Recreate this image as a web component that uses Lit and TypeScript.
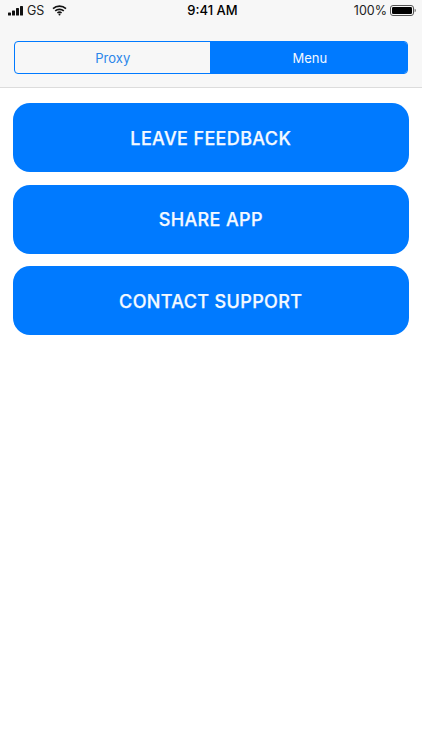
import { LitElement, html, css, svg } from "lit";
import { customElement } from "lit/decorators.js";

@customElement("app-root")
export class AppRoot extends LitElement {
  static styles = css`
    :host { display: block; width: 422px; height: 750px; background: #fff; font-family: Inter, "Liberation Sans", sans-serif; overflow: hidden; }
    .head { background: #f7f7f7; height: 88px; border-bottom: 1.5px solid #dcdcdc; box-sizing: border-box; display: flex; flex-direction: column; }
    .status { height: 20px; display: grid; grid-template-columns: 1fr auto 1fr; align-items: center; color: #000; font-size: 13px; padding: 0 6px 0 8px; }
    .left { display: flex; align-items: center; font-size: 12.5px; color: #222; }
    .carrier { margin-left: 2px; }
    .wifi { margin-left: 8px; }
    .time { font-weight: 500; font-size: 13px; padding-left: 1px; }
    .right { display: flex; justify-content: flex-end; align-items: center; font-size: 12.5px; color: #222; gap: 3px; }
    .seg { margin: 21px 14px 0 14px; height: 33px; display: grid; grid-template-columns: 194.5px 1fr; border: 1.5px solid #007aff; border-radius: 4px; box-sizing: border-box; overflow: hidden; font-size: 13px; }
    .seg div { display: flex; align-items: center; justify-content: center; color: #2a86ea; padding-left: 1px; }
    .seg .on { background: #007aff; color: #f2f8ff; padding-left: 3px; }
    .list { display: flex; flex-direction: column; gap: 12.5px; padding: 15px 13px 0 12.5px; }
    .btn { height: 69px; border-radius: 17px; background: #007aff; color: #f4f9ff; display: flex; align-items: center; justify-content: center; padding-top: 1px; box-sizing: border-box; font-size: 18px; font-weight: 500; -webkit-text-stroke: 0.25px #f4f9ff; letter-spacing: 0.36px; }
  `;

  render() {
    return html`
      <div class="head">
        <div class="status">
          <div class="left">
            <svg width="17" height="11" viewBox="0 0 17 11" fill="#111">
              ${svg`<rect x="0" y="7.5" width="3" height="3" rx=".6"/><rect x="4" y="5.5" width="3" height="5" rx=".6"/><rect x="8" y="3" width="3" height="7.5" rx=".6"/><rect x="12" y="1" width="3" height="9.5" rx=".6"/>`}
            </svg>
            <span class="carrier">GS</span>
            <svg class="wifi" width="15" height="11" viewBox="0 0 15 11" fill="none" stroke="#111" stroke-width="1.6">
              ${svg`<path d="M1 3.6C4.6.3 10.4.3 14 3.6"/><path d="M3.2 5.9c2.4-2.1 6.2-2.1 8.6 0"/><path d="M5.4 8c1.2-1 3-1 4.2 0"/><circle cx="7.5" cy="9.6" r="1" fill="#111" stroke="none"/>`}
            </svg>
          </div>
          <div class="time">9:41 AM</div>
          <div class="right">
            <span>100%</span>
            <svg width="26" height="11" viewBox="0 0 26 11">
              ${svg`<rect x=".5" y=".5" width="23" height="10" rx="2.5" fill="none" stroke="#555"/><rect x="2" y="2" width="20" height="7" rx="1.3" fill="#000"/><path d="M24.6 3.8c.8.2 1.2.8 1.2 1.7s-.4 1.5-1.2 1.7z" fill="#666"/>`}
            </svg>
          </div>
        </div>
        <div class="seg"><div>Proxy</div><div class="on">Menu</div></div>
      </div>
      <div class="list">
        <div class="btn">LEAVE FEEDBACK</div>
        <div class="btn">SHARE APP</div>
        <div class="btn">CONTACT SUPPORT</div>
      </div>
    `;
  }
}
